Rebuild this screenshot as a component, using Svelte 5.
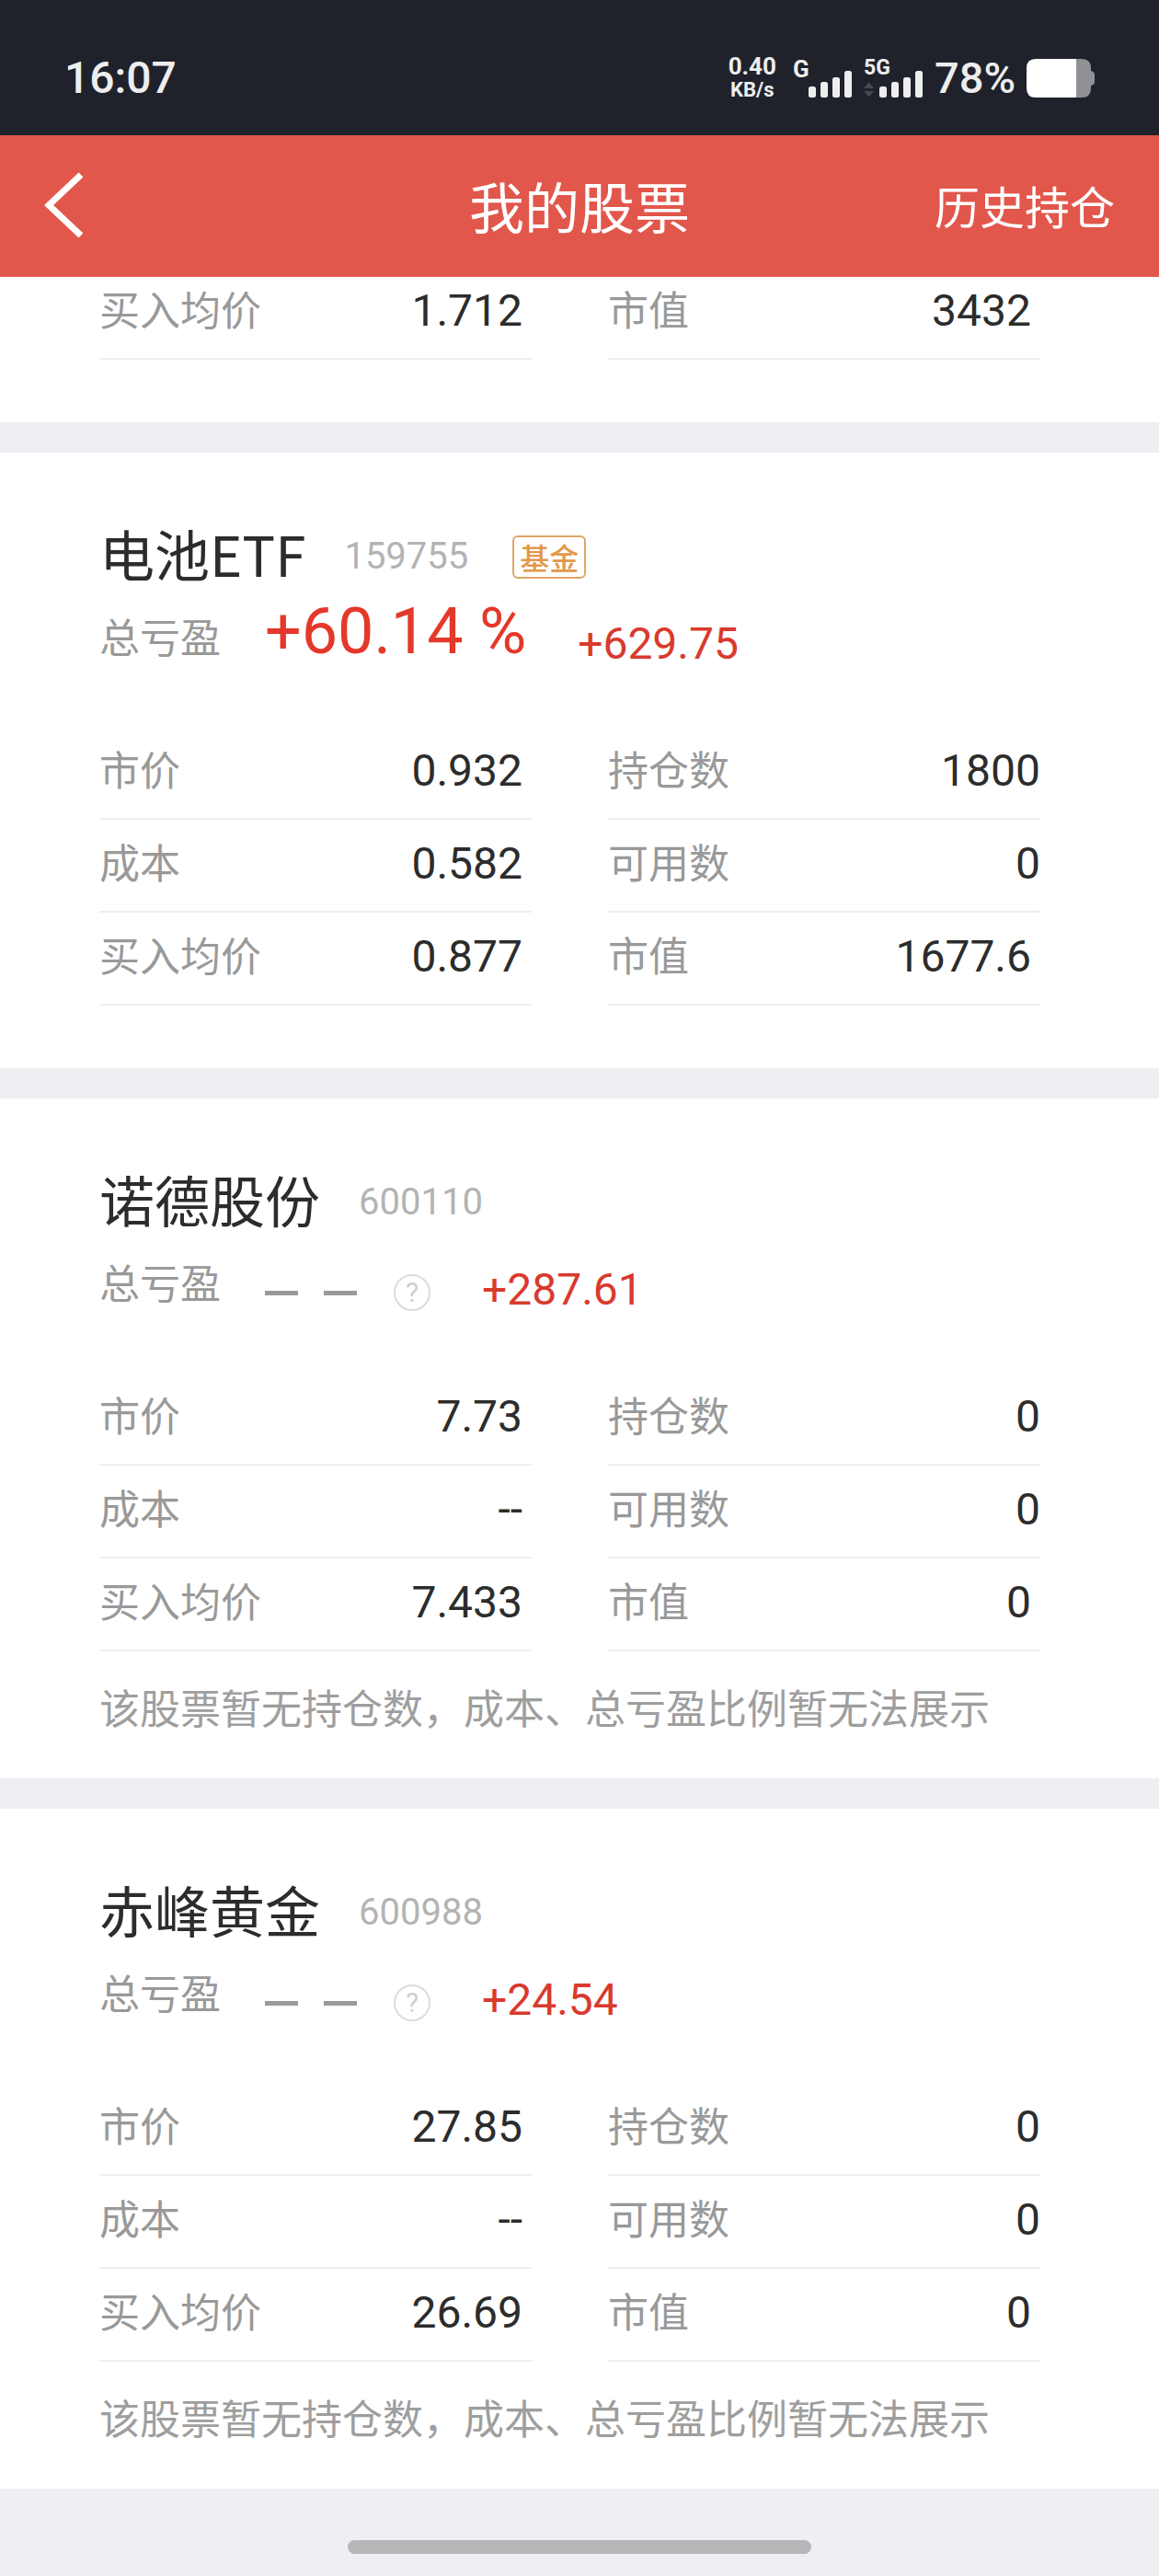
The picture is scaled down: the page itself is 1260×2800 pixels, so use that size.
<!-- src/App.svelte -->
<script>
    const noPositionNote = '该股票暂无持仓数，成本、总亏盈比例暂无法展示';

    const holdings = [
        {
            name: '电池ETF',
            code: '159755',
            tag: '基金',
            ratio: '+60.14 %',
            profit: '+629.75',
            price: '0.932',
            cost: '0.582',
            average: '0.877',
            amount: '1800',
            available: '0',
            value: '1677.6'
        },
        {
            name: '诺德股份',
            code: '600110',
            profit: '+287.61',
            price: '7.73',
            cost: '--',
            average: '7.433',
            amount: '0',
            available: '0',
            value: '0',
            note: noPositionNote
        },
        {
            name: '赤峰黄金',
            code: '600988',
            profit: '+24.54',
            price: '27.85',
            cost: '--',
            average: '26.69',
            amount: '0',
            available: '0',
            value: '0',
            note: noPositionNote
        }
    ];

    // left / right cells, row by row
    function cells(item) {
        return [
            { label: '市价', value: item.price, inset: true },
            { label: '持仓数', value: item.amount },
            { label: '成本', value: item.cost, inset: true },
            { label: '可用数', value: item.available },
            { label: '买入均价', value: item.average, inset: true },
            { label: '市值', value: item.value, inset: true }
        ];
    }
</script>

{#snippet figures(list)}
    <dl class="figures">
        {#each list as cell}
            <div class="cell" class:inset={cell.inset}>
                <dt>{cell.label}</dt>
                <dd>{cell.value}</dd>
            </div>
        {/each}
    </dl>
{/snippet}

{#snippet signal(label, size, arrows)}
    <svg class="signal" width="65" height="64" viewBox="0 -10 65 64" fill="#eeeeef">
        <text x="0" y={size - 5} font-size={size} font-weight="700">{label}</text>
        {#if arrows}
            <path d="M0 33 L5.5 26.5 L11 33 Z M0 36 L11 36 L5.5 42.5 Z" fill="#464951"/>
        {/if}
        <rect x="17" y="31" width="8" height="12" rx="2.5"/>
        <rect x="30" y="26" width="8" height="17" rx="2.5"/>
        <rect x="43" y="21" width="8" height="22" rx="2.5"/>
        <rect x="56" y="14" width="8" height="29" rx="2.5"/>
    </svg>
{/snippet}

<div class="screen">
    <div class="status-bar">
        <span class="clock">16:07</span>
        <div class="status-icons">
            <div class="net-speed">
                <span class="speed">0.40</span>
                <span class="unit">KB/s</span>
            </div>
            {@render signal('G', 26, false)}
            {@render signal('5G', 23, true)}
            <span class="battery-level">78%</span>
            <svg class="battery" width="74" height="42" viewBox="0 0 74 42">
                <path d="M54 0 H60 Q70 0 70 10 V13 Q74 14 74 17 V25 Q74 28 70 29 V32 Q70 42 60 42 H54 Z" fill="#8f9196"/>
                <path d="M10 0 H54 V42 H10 Q0 42 0 32 V10 Q0 0 10 0 Z" fill="#fff"/>
            </svg>
        </div>
    </div>

    <header class="nav-bar">
        <button class="back" aria-label="返回">
            <svg width="44" height="72" viewBox="0 0 44 72" fill="none" stroke="#fff" stroke-width="7">
                <path d="M40 3 L5 36 L40 69"/>
            </svg>
        </button>
        <h1>我的股票</h1>
        <a class="history" href="#history">历史持仓</a>
    </header>

    <main>
        <section class="card scrolled">
            {@render figures([
                { label: '买入均价', value: '1.712', inset: true },
                { label: '市值', value: '3432', inset: true }
            ])}
        </section>

        {#each holdings as item}
            <section class="card">
                <div class="card-title">
                    <h2>{item.name}</h2>
                    <span class="code">{item.code}</span>
                    {#if item.tag}
                        <span class="tag">{item.tag}</span>
                    {/if}
                </div>
                <div class="summary">
                    <span class="summary-label">总亏盈</span>
                    {#if item.ratio}
                        <span class="ratio">{item.ratio}</span>
                    {:else}
                        <div class="no-ratio">
                            <span class="dash"></span>
                            <span class="dash"></span>
                            <button class="help" aria-label="说明">?</button>
                        </div>
                    {/if}
                    <span class="profit">{item.profit}</span>
                </div>
                {@render figures(cells(item))}
                {#if item.note}
                    <p class="note">{item.note}</p>
                {/if}
            </section>
        {/each}
    </main>

    <div class="home-indicator"></div>
</div>

<style>
    :global(body) {
        margin: 0;
        background: #efeef3;
    }
    .screen {
        font-family: "Noto Sans CJK SC", sans-serif;
        color: #2c2c2c;
    }
    h1, h2, dl, dt, dd, p {
        margin: 0;
        font-weight: 400;
    }
    button {
        padding: 0;
        border: none;
        background: none;
        font-family: inherit;
    }
    .status-bar, .code, .ratio, .profit, .help, dd {
        font-family: Roboto, "Noto Sans CJK SC", sans-serif;
    }

    /* ── Status bar ── */
    .status-bar {
        display: flex;
        justify-content: space-between;
        align-items: center;
        padding: 49px 70px 26px;
        background: #1f222b;
        color: #eeeeef;
        line-height: 72px;
    }
    .clock {
        font-size: 48px;
        font-weight: 500;
    }
    .status-icons {
        display: flex;
        align-items: center;
        gap: 12px;
    }
    .net-speed {
        display: flex;
        flex-direction: column;
        align-items: center;
        margin-right: 6px;
        font-weight: 700;
        line-height: 25px;
    }
    .speed {
        font-size: 26px;
    }
    .unit {
        font-size: 22px;
    }
    .battery-level {
        font-size: 47px;
        font-weight: 500;
    }

    /* ── Nav bar ── */
    .nav-bar {
        position: relative;
        z-index: 1;
        display: grid;
        grid-template-columns: 1fr auto 1fr;
        align-items: center;
        padding: 0 48px 2px;
        background: #e2574c;
        color: #fff;
        line-height: 152px;
    }
    .back {
        display: flex;
        justify-self: start;
        cursor: pointer;
    }
    h1 {
        font-size: 60px;
    }
    .history {
        justify-self: end;
        font-size: 49px;
        color: inherit;
        text-decoration: none;
    }

    /* ── Cards ── */
    main {
        display: flex;
        flex-direction: column;
        gap: 33px;
    }
    .card {
        padding: 72px 129px 68px 108px;
        background: #fff;
    }
    /* the top card is partly under the nav bar */
    .card.scrolled {
        margin-top: -11px;
        padding-top: 0;
    }
    .card-title {
        display: flex;
        align-items: center;
        gap: 42px;
        line-height: 82px;
    }
    h2 {
        align-self: flex-start;
        font-size: 60px;
        line-height: 74px;
    }
    .code {
        font-size: 40px;
        color: #b3b3b3;
    }
    .tag {
        margin-left: 6px;
        padding: 0 6px;
        border: 2px solid #e0a566;
        border-radius: 6px;
        font-size: 32px;
        font-weight: 500;
        line-height: 43px;
        color: #e2984c;
    }

    /* ── Profit line ── */
    .summary {
        display: flex;
        align-items: flex-start;
        gap: 48px;
        min-height: 144px;
    }
    .summary-label {
        font-size: 44px;
        line-height: 90px;
        color: #999;
    }
    .ratio {
        font-size: 70px;
        line-height: 80px;
        color: #e4382a;
    }
    .profit {
        margin-left: 8px;
        font-size: 48px;
        line-height: 108px;
        color: #d93a2e;
    }
    .no-ratio {
        display: flex;
        align-items: center;
        gap: 28px;
        height: 114px;
    }
    .dash {
        width: 36px;
        height: 5px;
        background: #999;
    }
    .help {
        width: 40px;
        height: 40px;
        margin-left: 12px;
        border: 2px solid #dcdcdc;
        border-radius: 50%;
        font-size: 30px;
        line-height: 36px;
        color: #d0d0d0;
    }

    /* ── Figures ── */
    .figures {
        display: grid;
        grid-template-columns: 1fr 1fr;
        column-gap: 83px;
    }
    .cell {
        display: flex;
        justify-content: space-between;
        align-items: baseline;
        padding-bottom: 9px;
        border-bottom: 2px solid #eee;
    }
    .cell.inset {
        padding-right: 10px;
    }
    dt {
        font-size: 44px;
        line-height: 90px;
        color: #999;
    }
    dd {
        font-size: 48px;
        line-height: 80px;
    }
    .note {
        margin-bottom: -40px;
        padding-top: 10px;
        font-size: 44px;
        line-height: 100px;
        color: #9e9e9e;
    }

    /* ── Home indicator ── */
    .home-indicator {
        width: 40%;
        height: 15px;
        margin: 56px auto 24px;
        border-radius: 8px;
        background: #b7b7b9;
    }
</style>
